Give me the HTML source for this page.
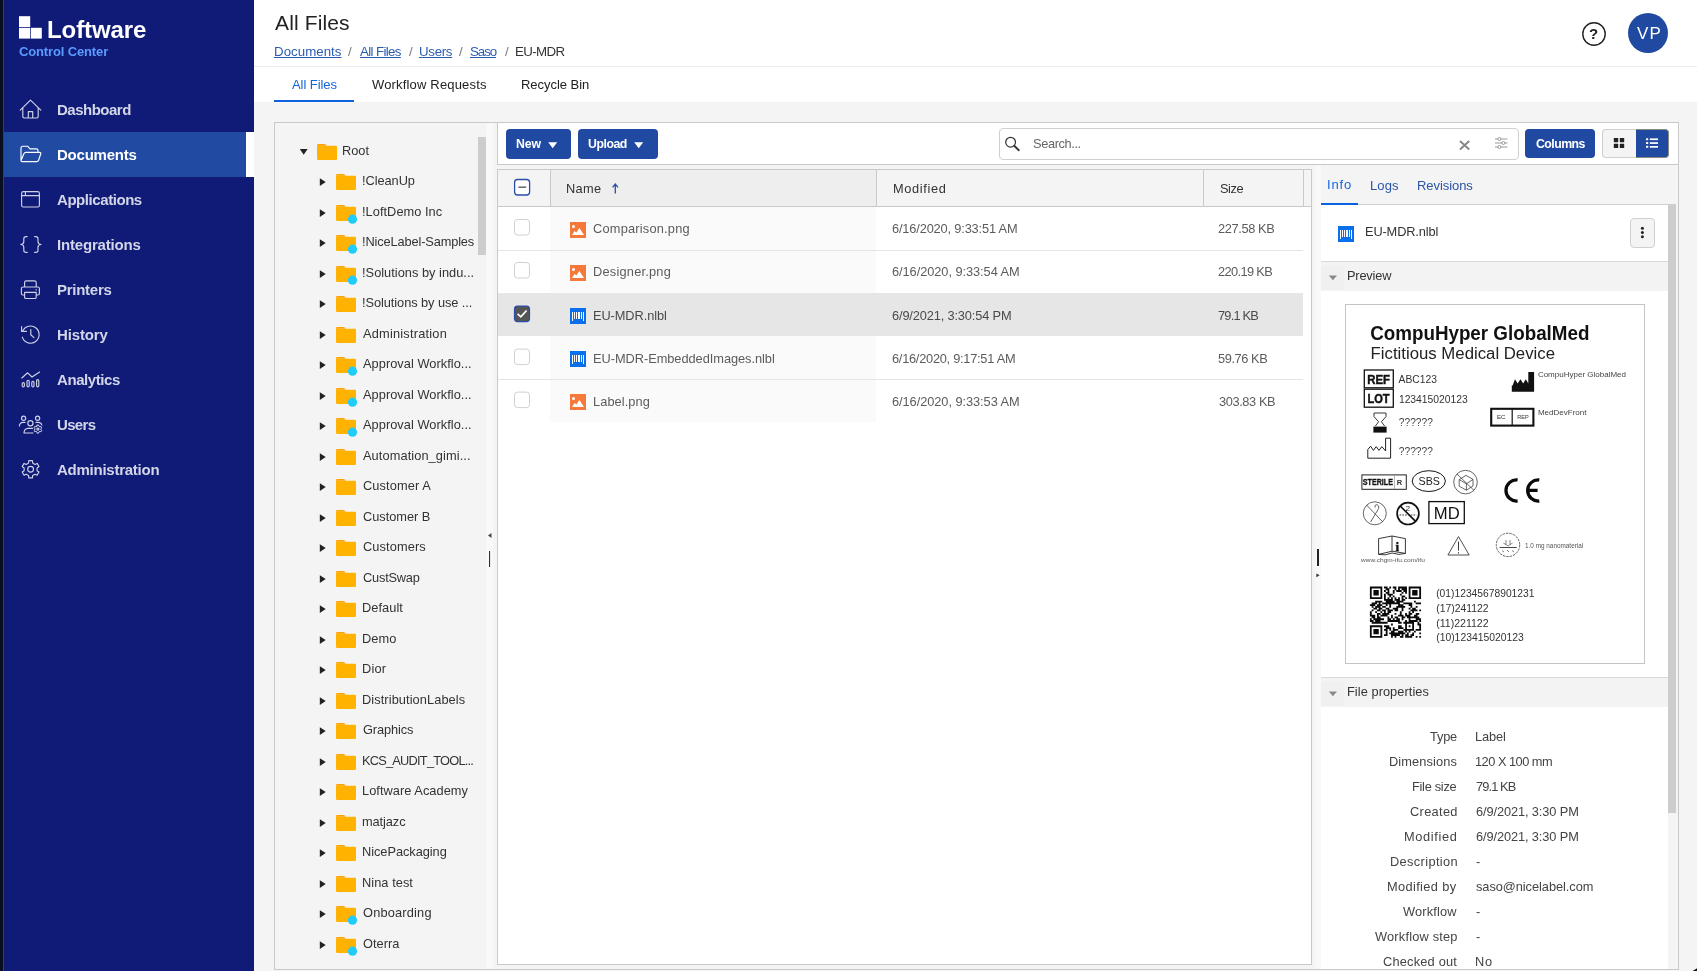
<!DOCTYPE html><html><head><meta charset="utf-8"><title>All Files</title><style>
*{box-sizing:border-box;margin:0;padding:0}
html,body{width:1697px;height:971px;overflow:hidden}
body{background:#f4f4f4;font-family:"Liberation Sans",sans-serif;color:#333;position:relative;font-size:13px}
.a{position:absolute}
.t{position:absolute;white-space:nowrap;line-height:1;will-change:transform}
.u{text-decoration:underline}
svg{position:absolute;overflow:visible;will-change:transform}
</style></head><body>
<div class="a" style="left:0px;top:0px;width:3px;height:971px;background:#0a0f1f;"></div>
<div class="a" style="left:3px;top:0px;width:1px;height:971px;background:#3c3f4a;"></div>
<div class="a" style="left:4px;top:0px;width:250px;height:971px;background:#0f1b77;"></div>
<div class="a" style="left:4px;top:132px;width:242px;height:45px;background:#214ba3;"></div>
<div class="a" style="left:246px;top:132px;width:8px;height:45px;background:#fff;"></div>
<svg style="left:19px;top:16px" width="24" height="23" viewBox="0 0 24 23"><rect x="0" y="0.2" width="11.2" height="10.8" fill="#fff"/><rect x="0" y="11.8" width="11.2" height="10.8" fill="#fff"/><rect x="11.9" y="11.8" width="10.9" height="10.8" fill="#fff"/></svg>
<div class="t" style="left:46.94px;top:18.00px;font-size:24px;color:#fff;font-weight:bold;letter-spacing:-0.097px;">Loftware</div>
<div class="t" style="left:18.98px;top:45.00px;font-size:13px;color:#5b9bff;font-weight:bold;letter-spacing:-0.137px;">Control Center</div>
<div class="t" style="left:56.73px;top:102.00px;font-size:15px;color:#d3d6e8;font-weight:bold;letter-spacing:-0.506px;">Dashboard</div>
<div class="t" style="left:56.73px;top:147.00px;font-size:15px;color:#fff;font-weight:bold;letter-spacing:-0.234px;">Documents</div>
<div class="t" style="left:57.33px;top:192.00px;font-size:15px;color:#d3d6e8;font-weight:bold;letter-spacing:-0.436px;">Applications</div>
<div class="t" style="left:56.73px;top:237.00px;font-size:15px;color:#d3d6e8;font-weight:bold;letter-spacing:-0.182px;">Integrations</div>
<div class="t" style="left:56.73px;top:282.00px;font-size:15px;color:#d3d6e8;font-weight:bold;letter-spacing:-0.271px;">Printers</div>
<div class="t" style="left:56.73px;top:327.00px;font-size:15px;color:#d3d6e8;font-weight:bold;letter-spacing:-0.150px;">History</div>
<div class="t" style="left:57.33px;top:372.00px;font-size:15px;color:#d3d6e8;font-weight:bold;letter-spacing:-0.434px;">Analytics</div>
<div class="t" style="left:56.80px;top:417.00px;font-size:15px;color:#d3d6e8;font-weight:bold;letter-spacing:-0.669px;">Users</div>
<div class="t" style="left:57.33px;top:462.00px;font-size:15px;color:#d3d6e8;font-weight:bold;letter-spacing:-0.250px;">Administration</div>
<div class="a" style="left:254px;top:0px;width:1443px;height:102px;background:#fff;"></div>
<div class="a" style="left:254px;top:66px;width:1443px;height:1px;background:#ececec;"></div>
<div class="t" style="left:274.50px;top:12.00px;font-size:21px;color:#222;letter-spacing:0.129px;">All Files</div>
<div class="t u" style="left:273.94px;top:45.00px;font-size:13.3px;color:#2a5db0;letter-spacing:0.029px;">Documents</div>
<div class="t u" style="left:360.00px;top:45.00px;font-size:13.3px;color:#2a5db0;letter-spacing:-0.636px;">All Files</div>
<div class="t u" style="left:419.00px;top:45.00px;font-size:13.3px;color:#2a5db0;letter-spacing:-0.312px;">Users</div>
<div class="t u" style="left:470.40px;top:45.00px;font-size:13.3px;color:#2a5db0;letter-spacing:-1.065px;">Saso</div>
<div class="t" style="left:347.50px;top:45.00px;font-size:13.3px;color:#777;">/</div>
<div class="t" style="left:408.50px;top:45.00px;font-size:13.3px;color:#777;">/</div>
<div class="t" style="left:459.00px;top:45.00px;font-size:13.3px;color:#777;">/</div>
<div class="t" style="left:504.50px;top:45.00px;font-size:13.3px;color:#777;">/</div>
<div class="t" style="left:514.94px;top:45.00px;font-size:13.3px;color:#333;letter-spacing:-0.621px;">EU-MDR</div>
<div class="t" style="left:292.00px;top:78.00px;font-size:13px;color:#1464dc;letter-spacing:-0.068px;">All Files</div>
<div class="t" style="left:372.00px;top:78.00px;font-size:13px;color:#222;letter-spacing:0.170px;">Workflow Requests</div>
<div class="t" style="left:520.96px;top:78.00px;font-size:13px;color:#222;letter-spacing:-0.032px;">Recycle Bin</div>
<div class="a" style="left:274px;top:100px;width:80px;height:2px;background:#0a62e0;"></div>
<div class="a" style="left:274px;top:102px;width:80px;height:1px;background:#fdf9f2;"></div>
<svg style="left:1580px;top:20px" width="28" height="28" viewBox="0 0 28 28"><circle cx="14" cy="14" r="11.2" fill="none" stroke="#222" stroke-width="1.4"/></svg>
<div class="t" style="left:1588.73px;top:26.00px;font-size:15px;color:#222;font-weight:bold;">?</div>
<div class="a" style="left:1628px;top:13px;width:40px;height:40px;background:#204aa2;border-radius:50%"></div>
<div class="t" style="left:1636.50px;top:25.00px;font-size:17px;color:#fff;letter-spacing:1.240px;">VP</div>
<svg style="left:0;top:0" width="1697" height="971" viewBox="0 0 1697 971" ><g fill="none" stroke="#cfd2e6" stroke-width="1.15" stroke-linecap="round" stroke-linejoin="round"><path d="M20.2 110.2 L30.5 100.2 L40.8 110.2 M22.8 108 V116.6 Q22.8 118 24.2 118 H36.8 Q38.2 118 38.2 116.6 V108 M28.3 118 V111.6 H32.7 V118"/><rect x="21.6" y="191.6" width="17.8" height="15.4" rx="1.8"/><path d="M21.6 195.6 H39.4 M25.4 191.6 V195.6"/><path d="M27.2 236.6 H26 Q23.8 236.6 23.8 238.8 V241.6 Q23.8 244.4 20.8 244.5 Q23.8 244.6 23.8 247.4 V250.2 Q23.8 252.4 26 252.4 H27.2 M34.6 236.6 H35.8 Q38 236.6 38 238.8 V241.6 Q38 244.4 41 244.5 Q38 244.6 38 247.4 V250.2 Q38 252.4 35.8 252.4 H34.6"/><path d="M24.6 287 V282.6 Q24.6 280.9 26.3 280.9 H34.5 Q36.2 280.9 36.2 282.6 V287 M24.6 295 H22.9 Q21.4 295 21.4 293.5 V288.6 Q21.4 287 23 287 H37.8 Q39.4 287 39.4 288.6 V293.5 Q39.4 295 37.9 295 H36.2 M24.6 292.4 H36.2 V297.2 Q36.2 298.5 34.9 298.5 H25.9 Q24.6 298.5 24.6 297.2 Z M36 289.8 H36.4"/><path d="M22.6 331.2 A8.6 8.6 0 1 1 22.3 337.2 M21.6 326.6 V331.4 H26.4 M30.8 329.6 V334.8 L34 337.6"/><path d="M21.8 378 L27.6 372.8 L32 377 L39.6 372"/><rect x="22.2" y="382.6" width="2.2" height="4.2" rx="1.1"/><rect x="27" y="380.2" width="2.2" height="6.6" rx="1.1"/><rect x="31.8" y="381.4" width="2.2" height="5.4" rx="1.1"/><rect x="36.6" y="379.6" width="2.2" height="7.2" rx="1.1"/><circle cx="23.6" cy="418.2" r="2.1"/><circle cx="37.6" cy="418.2" r="2.1"/><circle cx="30.4" cy="423.2" r="2.6"/><path d="M19.4 426 Q19.6 422.6 23 422.4 H25 M36 422.4 H38.2 Q41.4 422.6 41.8 425 M24 433 Q24.2 428.6 28 428.4 H32.6 M24 433 H33"/><circle cx="37.9" cy="429.1" r="1.05"/><path d="M37.05 425.09 L38.75 425.09 L38.83 426.25 L39.91 426.87 L40.95 426.36 L41.80 427.83 L40.83 428.48 L40.83 429.72 L41.80 430.37 L40.95 431.84 L39.91 431.33 L38.83 431.95 L38.75 433.11 L37.05 433.11 L36.97 431.95 L35.89 431.33 L34.85 431.84 L34.00 430.37 L34.97 429.72 L34.97 428.48 L34.00 427.83 L34.85 426.36 L35.89 426.87 L36.97 426.25 Z" stroke-width="1"/><path d="M28.77 460.69 L32.43 460.69 L32.64 463.02 L35.02 464.40 L37.14 463.41 L38.97 466.58 L37.06 467.93 L37.06 470.67 L38.97 472.02 L37.14 475.19 L35.02 474.20 L32.64 475.58 L32.43 477.91 L28.77 477.91 L28.56 475.58 L26.18 474.20 L24.06 475.19 L22.23 472.02 L24.14 470.67 L24.14 467.93 L22.23 466.58 L24.06 463.41 L26.18 464.40 L28.56 463.02 Z"/><circle cx="30.6" cy="469.3" r="2.9"/></g><g fill="none" stroke="#ffffff" stroke-width="1.15" stroke-linecap="round" stroke-linejoin="round"><path d="M21 160.5 V148 Q21 146.2 22.8 146.2 H27.5 L30 148.8 H36.2 Q38 148.8 38 150.6 V152.3 M21 160.5 L24 153.6 Q24.5 152.3 26 152.3 H39.5 Q41.3 152.3 40.7 154 L38.6 160.2 Q38.1 161.6 36.6 161.6 H22.2 Q21 161.6 21 160.5"/></g></svg>
<div class="a" style="left:274px;top:122px;width:1405px;height:848px;background:transparent;border:1px solid #c9c9c9"></div>
<div class="a" style="left:486px;top:123px;width:7px;height:846px;background:#faf9f8;"></div>
<div class="a" style="left:478px;top:137px;width:8px;height:118px;background:#cdcdcd;"></div>
<svg style="left:0;top:0" width="1697" height="971" viewBox="0 0 1697 971" ><path d="M491.5 533 L488 535.5 L491.5 538 Z" fill="#444"/><rect x="489" y="551" width="1.1" height="16" fill="#333"/></svg>
<div class="t" style="left:342.18px;top:145.00px;font-size:12.8px;color:#333;letter-spacing:0.005px;">Root</div>
<div class="t" style="left:362.15px;top:175.00px;font-size:12.8px;color:#333;letter-spacing:-0.059px;">!CleanUp</div>
<div class="t" style="left:362.15px;top:206.00px;font-size:12.8px;color:#333;letter-spacing:0.041px;">!LoftDemo Inc</div>
<div class="t" style="left:362.15px;top:236.00px;font-size:12.8px;color:#333;letter-spacing:-0.133px;">!NiceLabel-Samples</div>
<div class="t" style="left:362.15px;top:267.00px;font-size:12.8px;color:#333;letter-spacing:0.018px;">!Solutions by indu...</div>
<div class="t" style="left:362.15px;top:297.00px;font-size:12.8px;color:#333;letter-spacing:-0.067px;">!Solutions by use ...</div>
<div class="t" style="left:363.30px;top:328.00px;font-size:12.8px;color:#333;letter-spacing:0.206px;">Administration</div>
<div class="t" style="left:363.30px;top:358.00px;font-size:12.8px;color:#333;letter-spacing:0.042px;">Approval Workflo...</div>
<div class="t" style="left:363.30px;top:389.00px;font-size:12.8px;color:#333;letter-spacing:0.042px;">Approval Workflo...</div>
<div class="t" style="left:363.30px;top:419.00px;font-size:12.8px;color:#333;letter-spacing:0.042px;">Approval Workflo...</div>
<div class="t" style="left:363.30px;top:450.00px;font-size:12.8px;color:#333;letter-spacing:0.088px;">Automation_gimi...</div>
<div class="t" style="left:362.66px;top:480.00px;font-size:12.8px;color:#333;letter-spacing:0.114px;">Customer A</div>
<div class="t" style="left:362.66px;top:511.00px;font-size:12.8px;color:#333;letter-spacing:-0.027px;">Customer B</div>
<div class="t" style="left:362.66px;top:541.00px;font-size:12.8px;color:#333;letter-spacing:0.112px;">Customers</div>
<div class="t" style="left:362.66px;top:572.00px;font-size:12.8px;color:#333;letter-spacing:-0.207px;">CustSwap</div>
<div class="t" style="left:362.28px;top:602.00px;font-size:12.8px;color:#333;letter-spacing:0.052px;">Default</div>
<div class="t" style="left:362.28px;top:633.00px;font-size:12.8px;color:#333;letter-spacing:0.108px;">Demo</div>
<div class="t" style="left:362.28px;top:663.00px;font-size:12.8px;color:#333;letter-spacing:0.176px;">Dior</div>
<div class="t" style="left:362.28px;top:694.00px;font-size:12.8px;color:#333;letter-spacing:0.083px;">DistributionLabels</div>
<div class="t" style="left:362.66px;top:724.00px;font-size:12.8px;color:#333;letter-spacing:-0.116px;">Graphics</div>
<div class="t" style="left:362.28px;top:755.00px;font-size:12.8px;color:#333;letter-spacing:-0.769px;">KCS_AUDIT_TOOL...</div>
<div class="t" style="left:362.28px;top:785.00px;font-size:12.8px;color:#333;letter-spacing:0.043px;">Loftware Academy</div>
<div class="t" style="left:362.47px;top:816.00px;font-size:12.8px;color:#333;letter-spacing:-0.091px;">matjazc</div>
<div class="t" style="left:362.28px;top:846.00px;font-size:12.8px;color:#333;letter-spacing:-0.049px;">NicePackaging</div>
<div class="t" style="left:362.28px;top:877.00px;font-size:12.8px;color:#333;letter-spacing:0.053px;">Nina test</div>
<div class="t" style="left:362.72px;top:907.00px;font-size:12.8px;color:#333;letter-spacing:0.185px;">Onboarding</div>
<div class="t" style="left:362.72px;top:938.00px;font-size:12.8px;color:#333;letter-spacing:0.005px;">Oterra</div>
<svg style="left:0;top:0" width="1697" height="971" viewBox="0 0 1697 971" ><path d="M317 145.2 Q317 144 318.2 144 H325 L326.8 145.8 H317 Z" fill="#ffa000"/><path d="M317 145.7 H335.8 Q337 145.7 337 146.9 V158.8 Q337 160 335.8 160 H318.2 Q317 160 317 158.8 Z" fill="#ffb300"/><path d="M299.8 149 H307.6 L303.7 154.8 Z" fill="#222"/><path d="M336 175.2 Q336 174 337.2 174 H344 L345.8 175.8 H336 Z" fill="#ffa000"/><path d="M336 175.7 H354.8 Q356 175.7 356 176.9 V188.8 Q356 190 354.8 190 H337.2 Q336 190 336 188.8 Z" fill="#ffb300"/><path d="M319.8 178.29999999999998 V185.9 L325.7 182.1 Z" fill="#222"/><path d="M336 206.2 Q336 205 337.2 205 H344 L345.8 206.8 H336 Z" fill="#ffa000"/><path d="M336 206.7 H354.8 Q356 206.7 356 207.9 V219.8 Q356 221 354.8 221 H337.2 Q336 221 336 219.8 Z" fill="#ffb300"/><circle cx="352.5" cy="219.2" r="4.6" fill="#22ccfa"/><path d="M319.8 209.29999999999998 V216.9 L325.7 213.1 Z" fill="#222"/><path d="M336 236.2 Q336 235 337.2 235 H344 L345.8 236.8 H336 Z" fill="#ffa000"/><path d="M336 236.7 H354.8 Q356 236.7 356 237.9 V249.8 Q356 251 354.8 251 H337.2 Q336 251 336 249.8 Z" fill="#ffb300"/><circle cx="352.5" cy="249.2" r="4.6" fill="#22ccfa"/><path d="M319.8 239.29999999999998 V246.9 L325.7 243.1 Z" fill="#222"/><path d="M336 267.2 Q336 266 337.2 266 H344 L345.8 267.8 H336 Z" fill="#ffa000"/><path d="M336 267.7 H354.8 Q356 267.7 356 268.9 V280.8 Q356 282 354.8 282 H337.2 Q336 282 336 280.8 Z" fill="#ffb300"/><circle cx="352.5" cy="280.2" r="4.6" fill="#22ccfa"/><path d="M319.8 270.3 V277.90000000000003 L325.7 274.1 Z" fill="#222"/><path d="M336 297.2 Q336 296 337.2 296 H344 L345.8 297.8 H336 Z" fill="#ffa000"/><path d="M336 297.7 H354.8 Q356 297.7 356 298.9 V310.8 Q356 312 354.8 312 H337.2 Q336 312 336 310.8 Z" fill="#ffb300"/><path d="M319.8 300.3 V307.90000000000003 L325.7 304.1 Z" fill="#222"/><path d="M336 328.2 Q336 327 337.2 327 H344 L345.8 328.8 H336 Z" fill="#ffa000"/><path d="M336 328.7 H354.8 Q356 328.7 356 329.9 V341.8 Q356 343 354.8 343 H337.2 Q336 343 336 341.8 Z" fill="#ffb300"/><path d="M319.8 331.3 V338.90000000000003 L325.7 335.1 Z" fill="#222"/><path d="M336 358.2 Q336 357 337.2 357 H344 L345.8 358.8 H336 Z" fill="#ffa000"/><path d="M336 358.7 H354.8 Q356 358.7 356 359.9 V371.8 Q356 373 354.8 373 H337.2 Q336 373 336 371.8 Z" fill="#ffb300"/><circle cx="352.5" cy="371.2" r="4.6" fill="#22ccfa"/><path d="M319.8 361.3 V368.90000000000003 L325.7 365.1 Z" fill="#222"/><path d="M336 389.2 Q336 388 337.2 388 H344 L345.8 389.8 H336 Z" fill="#ffa000"/><path d="M336 389.7 H354.8 Q356 389.7 356 390.9 V402.8 Q356 404 354.8 404 H337.2 Q336 404 336 402.8 Z" fill="#ffb300"/><circle cx="352.5" cy="402.2" r="4.6" fill="#22ccfa"/><path d="M319.8 392.3 V399.90000000000003 L325.7 396.1 Z" fill="#222"/><path d="M336 419.2 Q336 418 337.2 418 H344 L345.8 419.8 H336 Z" fill="#ffa000"/><path d="M336 419.7 H354.8 Q356 419.7 356 420.9 V432.8 Q356 434 354.8 434 H337.2 Q336 434 336 432.8 Z" fill="#ffb300"/><circle cx="352.5" cy="432.2" r="4.6" fill="#22ccfa"/><path d="M319.8 422.3 V429.90000000000003 L325.7 426.1 Z" fill="#222"/><path d="M336 450.2 Q336 449 337.2 449 H344 L345.8 450.8 H336 Z" fill="#ffa000"/><path d="M336 450.7 H354.8 Q356 450.7 356 451.9 V463.8 Q356 465 354.8 465 H337.2 Q336 465 336 463.8 Z" fill="#ffb300"/><path d="M319.8 453.3 V460.90000000000003 L325.7 457.1 Z" fill="#222"/><path d="M336 480.2 Q336 479 337.2 479 H344 L345.8 480.8 H336 Z" fill="#ffa000"/><path d="M336 480.7 H354.8 Q356 480.7 356 481.9 V493.8 Q356 495 354.8 495 H337.2 Q336 495 336 493.8 Z" fill="#ffb300"/><path d="M319.8 483.3 V490.90000000000003 L325.7 487.1 Z" fill="#222"/><path d="M336 511.2 Q336 510 337.2 510 H344 L345.8 511.8 H336 Z" fill="#ffa000"/><path d="M336 511.7 H354.8 Q356 511.7 356 512.9 V524.8 Q356 526 354.8 526 H337.2 Q336 526 336 524.8 Z" fill="#ffb300"/><path d="M319.8 514.3000000000001 V521.9 L325.7 518.1 Z" fill="#222"/><path d="M336 541.2 Q336 540 337.2 540 H344 L345.8 541.8 H336 Z" fill="#ffa000"/><path d="M336 541.7 H354.8 Q356 541.7 356 542.9 V554.8 Q356 556 354.8 556 H337.2 Q336 556 336 554.8 Z" fill="#ffb300"/><path d="M319.8 544.3000000000001 V551.9 L325.7 548.1 Z" fill="#222"/><path d="M336 572.2 Q336 571 337.2 571 H344 L345.8 572.8 H336 Z" fill="#ffa000"/><path d="M336 572.7 H354.8 Q356 572.7 356 573.9 V585.8 Q356 587 354.8 587 H337.2 Q336 587 336 585.8 Z" fill="#ffb300"/><path d="M319.8 575.3000000000001 V582.9 L325.7 579.1 Z" fill="#222"/><path d="M336 602.2 Q336 601 337.2 601 H344 L345.8 602.8 H336 Z" fill="#ffa000"/><path d="M336 602.7 H354.8 Q356 602.7 356 603.9 V615.8 Q356 617 354.8 617 H337.2 Q336 617 336 615.8 Z" fill="#ffb300"/><path d="M319.8 605.3000000000001 V612.9 L325.7 609.1 Z" fill="#222"/><path d="M336 633.2 Q336 632 337.2 632 H344 L345.8 633.8 H336 Z" fill="#ffa000"/><path d="M336 633.7 H354.8 Q356 633.7 356 634.9 V646.8 Q356 648 354.8 648 H337.2 Q336 648 336 646.8 Z" fill="#ffb300"/><path d="M319.8 636.3000000000001 V643.9 L325.7 640.1 Z" fill="#222"/><path d="M336 663.2 Q336 662 337.2 662 H344 L345.8 663.8 H336 Z" fill="#ffa000"/><path d="M336 663.7 H354.8 Q356 663.7 356 664.9 V676.8 Q356 678 354.8 678 H337.2 Q336 678 336 676.8 Z" fill="#ffb300"/><path d="M319.8 666.3000000000001 V673.9 L325.7 670.1 Z" fill="#222"/><path d="M336 694.2 Q336 693 337.2 693 H344 L345.8 694.8 H336 Z" fill="#ffa000"/><path d="M336 694.7 H354.8 Q356 694.7 356 695.9 V707.8 Q356 709 354.8 709 H337.2 Q336 709 336 707.8 Z" fill="#ffb300"/><path d="M319.8 697.3000000000001 V704.9 L325.7 701.1 Z" fill="#222"/><path d="M336 724.2 Q336 723 337.2 723 H344 L345.8 724.8 H336 Z" fill="#ffa000"/><path d="M336 724.7 H354.8 Q356 724.7 356 725.9 V737.8 Q356 739 354.8 739 H337.2 Q336 739 336 737.8 Z" fill="#ffb300"/><path d="M319.8 727.3000000000001 V734.9 L325.7 731.1 Z" fill="#222"/><path d="M336 755.2 Q336 754 337.2 754 H344 L345.8 755.8 H336 Z" fill="#ffa000"/><path d="M336 755.7 H354.8 Q356 755.7 356 756.9 V768.8 Q356 770 354.8 770 H337.2 Q336 770 336 768.8 Z" fill="#ffb300"/><path d="M319.8 758.3000000000001 V765.9 L325.7 762.1 Z" fill="#222"/><path d="M336 785.2 Q336 784 337.2 784 H344 L345.8 785.8 H336 Z" fill="#ffa000"/><path d="M336 785.7 H354.8 Q356 785.7 356 786.9 V798.8 Q356 800 354.8 800 H337.2 Q336 800 336 798.8 Z" fill="#ffb300"/><path d="M319.8 788.3000000000001 V795.9 L325.7 792.1 Z" fill="#222"/><path d="M336 816.2 Q336 815 337.2 815 H344 L345.8 816.8 H336 Z" fill="#ffa000"/><path d="M336 816.7 H354.8 Q356 816.7 356 817.9 V829.8 Q356 831 354.8 831 H337.2 Q336 831 336 829.8 Z" fill="#ffb300"/><path d="M319.8 819.3000000000001 V826.9 L325.7 823.1 Z" fill="#222"/><path d="M336 846.2 Q336 845 337.2 845 H344 L345.8 846.8 H336 Z" fill="#ffa000"/><path d="M336 846.7 H354.8 Q356 846.7 356 847.9 V859.8 Q356 861 354.8 861 H337.2 Q336 861 336 859.8 Z" fill="#ffb300"/><path d="M319.8 849.3000000000001 V856.9 L325.7 853.1 Z" fill="#222"/><path d="M336 877.2 Q336 876 337.2 876 H344 L345.8 877.8 H336 Z" fill="#ffa000"/><path d="M336 877.7 H354.8 Q356 877.7 356 878.9 V890.8 Q356 892 354.8 892 H337.2 Q336 892 336 890.8 Z" fill="#ffb300"/><path d="M319.8 880.3000000000001 V887.9 L325.7 884.1 Z" fill="#222"/><path d="M336 907.2 Q336 906 337.2 906 H344 L345.8 907.8 H336 Z" fill="#ffa000"/><path d="M336 907.7 H354.8 Q356 907.7 356 908.9 V920.8 Q356 922 354.8 922 H337.2 Q336 922 336 920.8 Z" fill="#ffb300"/><circle cx="352.5" cy="920.2" r="4.6" fill="#22ccfa"/><path d="M319.8 910.3000000000001 V917.9 L325.7 914.1 Z" fill="#222"/><path d="M336 938.2 Q336 937 337.2 937 H344 L345.8 938.8 H336 Z" fill="#ffa000"/><path d="M336 938.7 H354.8 Q356 938.7 356 939.9 V951.8 Q356 953 354.8 953 H337.2 Q336 953 336 951.8 Z" fill="#ffb300"/><circle cx="352.5" cy="951.2" r="4.6" fill="#22ccfa"/><path d="M319.8 941.3000000000001 V948.9 L325.7 945.1 Z" fill="#222"/></svg>
<div class="a" style="left:497px;top:123px;width:1181px;height:41px;background:#fff;border-left:1px solid #c9c9c9"></div>
<div class="a" style="left:497px;top:164px;width:1181px;height:1px;background:#c9c9c9;"></div>
<div class="a" style="left:506px;top:129px;width:65px;height:30px;background:#204aa2;border-radius:4px"></div>
<div class="t" style="left:516.00px;top:138.00px;font-size:12.3px;color:#fff;font-weight:bold;letter-spacing:-0.169px;">New</div>
<div class="a" style="left:578px;top:129px;width:80px;height:30px;background:#204aa2;border-radius:4px"></div>
<div class="t" style="left:588.26px;top:138.00px;font-size:12.3px;color:#fff;font-weight:bold;letter-spacing:-0.472px;">Upload</div>
<svg style="left:0;top:0" width="1697" height="971" viewBox="0 0 1697 971" ><path d="M548.2 142.2 H557.2 L552.7 148.3 Z M634.2 142.2 H643.2 L638.7 148.3 Z" fill="#fff"/></svg>
<div class="a" style="left:999px;top:128px;width:520px;height:32px;background:#fff;border:1px solid #cfcfcf;border-radius:4px"></div>
<svg style="left:0;top:0" width="1697" height="971" viewBox="0 0 1697 971" ><circle cx="1010.6" cy="142.2" r="4.9" fill="none" stroke="#333" stroke-width="1.2"/><path d="M1014.2 145.8 L1018.8 150.2" stroke="#333" stroke-width="1.9" stroke-linecap="round"/><path d="M1460 141 L1469.2 149.6 M1469.2 141 L1460 149.6" stroke="#888" stroke-width="2"/><g stroke="#999" stroke-width="1" fill="#fff"><path d="M1495 139 H1507.4 M1495 143 H1507.4 M1495 147 H1507.4"/><circle cx="1499.4" cy="139" r="1.5"/><circle cx="1503.4" cy="143" r="1.5"/><circle cx="1499.4" cy="147" r="1.5"/></g></svg>
<div class="t" style="left:1033.42px;top:138.00px;font-size:12.8px;color:#666;letter-spacing:-0.380px;">Search...</div>
<div class="a" style="left:1525px;top:129px;width:70px;height:29px;background:#204aa2;border-radius:4px"></div>
<div class="t" style="left:1535.51px;top:138.00px;font-size:12.3px;color:#fff;font-weight:bold;letter-spacing:-0.527px;">Columns</div>
<div class="a" style="left:1602px;top:129px;width:34px;height:29px;background:#f4f4f4;border:1px solid #cfcfcf;border-right:none;border-radius:4px 0 0 4px"></div>
<div class="a" style="left:1635.5px;top:129px;width:33.5px;height:29px;background:#204aa2;border-radius:0 4px 4px 0;border:1px solid #8a8a80;border-left:none"></div>
<svg style="left:0;top:0" width="1697" height="971" viewBox="0 0 1697 971" ><g fill="#222"><rect x="1613.8" y="138" width="4.4" height="4.2" rx="0.6"/><rect x="1619.8" y="138" width="4.4" height="4.2" rx="0.6"/><rect x="1613.8" y="143.8" width="4.4" height="4.2" rx="0.6"/><rect x="1619.8" y="143.8" width="4.4" height="4.2" rx="0.6"/></g><g fill="#fff"><rect x="1646" y="138.2" width="2.2" height="2" rx="0.5"/><rect x="1646" y="142" width="2.2" height="2" rx="0.5"/><rect x="1646" y="145.8" width="2.2" height="2" rx="0.5"/><rect x="1649.8" y="138.4" width="8.2" height="1.7"/><rect x="1649.8" y="142.2" width="8.2" height="1.7"/><rect x="1649.8" y="146" width="8.2" height="1.7"/></g></svg>
<div class="a" style="left:497px;top:169px;width:815px;height:796px;background:#fff;border:1px solid #c9c9c9"></div>
<div class="a" style="left:498px;top:170px;width:813px;height:36px;background:#f4f4f4;"></div>
<div class="a" style="left:550px;top:170px;width:326px;height:36px;background:#eeeeee;"></div>
<div class="a" style="left:498px;top:206px;width:813px;height:1px;background:#c9c9c9;"></div>
<div class="a" style="left:550px;top:170px;width:1px;height:36px;background:#c9c9c9;"></div>
<div class="a" style="left:876px;top:170px;width:1px;height:36px;background:#c9c9c9;"></div>
<div class="a" style="left:1203px;top:170px;width:1px;height:36px;background:#c9c9c9;"></div>
<div class="a" style="left:1303px;top:170px;width:1px;height:36px;background:#c9c9c9;"></div>
<div class="t" style="left:566.38px;top:183.00px;font-size:12.8px;color:#333;letter-spacing:0.341px;">Name</div>
<div class="t" style="left:892.98px;top:183.00px;font-size:12.8px;color:#333;letter-spacing:0.630px;">Modified</div>
<div class="t" style="left:1219.92px;top:183.00px;font-size:12.8px;color:#333;letter-spacing:-0.436px;">Size</div>
<svg style="left:0;top:0" width="1697" height="971" viewBox="0 0 1697 971" ><path d="M615.3 193.6 V184.6 M612.6 187.4 L615.3 184 L618 187.4" fill="none" stroke="#2a4ea8" stroke-width="1.3"/></svg>
<div class="a" style="left:550px;top:207px;width:326px;height:43px;background:#fafafa;"></div>
<div class="t" style="left:593.36px;top:223.00px;font-size:12.8px;color:#5c5c5c;letter-spacing:0.209px;">Comparison.png</div>
<div class="t" style="left:892.36px;top:223.00px;font-size:12.8px;color:#5c5c5c;letter-spacing:-0.158px;">6/16/2020, 9:33:51 AM</div>
<div class="t" style="left:1218.36px;top:223.00px;font-size:12.8px;color:#5c5c5c;letter-spacing:-0.375px;">227.58 KB</div>
<div class="a" style="left:550px;top:250px;width:326px;height:43px;background:#fafafa;"></div>
<div class="a" style="left:498px;top:250px;width:805px;height:1px;background:#e5e5e5;"></div>
<div class="t" style="left:592.98px;top:266.00px;font-size:12.8px;color:#5c5c5c;letter-spacing:0.218px;">Designer.png</div>
<div class="t" style="left:892.36px;top:266.00px;font-size:12.8px;color:#5c5c5c;letter-spacing:-0.058px;">6/16/2020, 9:33:54 AM</div>
<div class="t" style="left:1218.36px;top:266.00px;font-size:12.8px;color:#5c5c5c;letter-spacing:-0.625px;">220.19 KB</div>
<div class="a" style="left:498px;top:293px;width:805px;height:43.4px;background:#e6e6e6;"></div>
<div class="t" style="left:592.98px;top:310.00px;font-size:12.8px;color:#4a4a4a;letter-spacing:-0.083px;">EU-MDR.nlbl</div>
<div class="t" style="left:892.36px;top:310.00px;font-size:12.8px;color:#4a4a4a;letter-spacing:-0.146px;">6/9/2021, 3:30:54 PM</div>
<div class="t" style="left:1218.36px;top:310.00px;font-size:12.8px;color:#4a4a4a;letter-spacing:-0.787px;">79.1 KB</div>
<div class="a" style="left:550px;top:336px;width:326px;height:43px;background:#fafafa;"></div>
<div class="t" style="left:592.98px;top:353.00px;font-size:12.8px;color:#5c5c5c;letter-spacing:-0.040px;">EU-MDR-EmbeddedImages.nlbl</div>
<div class="t" style="left:892.36px;top:353.00px;font-size:12.8px;color:#5c5c5c;letter-spacing:-0.258px;">6/16/2020, 9:17:51 AM</div>
<div class="t" style="left:1218.49px;top:353.00px;font-size:12.8px;color:#5c5c5c;letter-spacing:-0.422px;">59.76 KB</div>
<div class="a" style="left:550px;top:379px;width:326px;height:42.6px;background:#fafafa;"></div>
<div class="a" style="left:498px;top:379px;width:805px;height:1px;background:#e5e5e5;"></div>
<div class="t" style="left:592.98px;top:396.00px;font-size:12.8px;color:#5c5c5c;letter-spacing:0.075px;">Label.png</div>
<div class="t" style="left:892.36px;top:396.00px;font-size:12.8px;color:#5c5c5c;letter-spacing:-0.058px;">6/16/2020, 9:33:53 AM</div>
<div class="t" style="left:1218.55px;top:396.00px;font-size:12.8px;color:#5c5c5c;letter-spacing:-0.399px;">303.83 KB</div>
<svg style="left:0;top:0" width="1697" height="971" viewBox="0 0 1697 971" ><rect x="570" y="222" width="16" height="16" fill="#f5793b"/><circle cx="573.5" cy="226.6" r="1.5" fill="#fff"/><path d="M572 235 L574.6 231 L576.3 232.4 L579.4 228 L584 235 Z" fill="#fff"/><rect x="514.5" y="219.5" width="15" height="15.5" rx="3" fill="#fff" stroke="#d0d0d0" stroke-width="1"/><rect x="570" y="265" width="16" height="16" fill="#f5793b"/><circle cx="573.5" cy="269.6" r="1.5" fill="#fff"/><path d="M572 278 L574.6 274 L576.3 275.4 L579.4 271 L584 278 Z" fill="#fff"/><rect x="514.5" y="262.5" width="15" height="15.5" rx="3" fill="#fff" stroke="#d0d0d0" stroke-width="1"/><rect x="570" y="308" width="16" height="16" fill="#0a70ea"/><rect x="572" y="312" width="1" height="9" fill="#fff"/><rect x="574" y="312" width="1" height="7" fill="#fff"/><rect x="576" y="312" width="1" height="7" fill="#fff"/><rect x="578" y="312" width="2" height="7" fill="#fff"/><rect x="581" y="312" width="1" height="7" fill="#fff"/><rect x="583" y="312" width="1" height="9" fill="#fff"/><rect x="514.5" y="306.1" width="15" height="15.5" rx="3" fill="#555" stroke="#2a4ea8" stroke-width="1.2"/><path d="M517.6 313.90000000000003 L520.8 316.90000000000003 L526.6 310.5" fill="none" stroke="#fff" stroke-width="1.7"/><rect x="570" y="351" width="16" height="16" fill="#0a70ea"/><rect x="572" y="355" width="1" height="9" fill="#fff"/><rect x="574" y="355" width="1" height="7" fill="#fff"/><rect x="576" y="355" width="1" height="7" fill="#fff"/><rect x="578" y="355" width="2" height="7" fill="#fff"/><rect x="581" y="355" width="1" height="7" fill="#fff"/><rect x="583" y="355" width="1" height="9" fill="#fff"/><rect x="514.5" y="349.1" width="15" height="15.5" rx="3" fill="#fff" stroke="#d0d0d0" stroke-width="1"/><rect x="570" y="394" width="16" height="16" fill="#f5793b"/><circle cx="573.5" cy="398.6" r="1.5" fill="#fff"/><path d="M572 407 L574.6 403 L576.3 404.4 L579.4 400 L584 407 Z" fill="#fff"/><rect x="514.5" y="392.1" width="15" height="15.5" rx="3" fill="#fff" stroke="#d0d0d0" stroke-width="1"/><rect x="514.6" y="179.5" width="15" height="15.5" rx="3" fill="#fff" stroke="#2a4ea8" stroke-width="1.3"/><path d="M518.4 187.2 H526.2" stroke="#666" stroke-width="1.5"/></svg>
<div class="a" style="left:1315px;top:165px;width:6px;height:804px;background:#faf9f8;"></div>
<svg style="left:0;top:0" width="1697" height="971" viewBox="0 0 1697 971" ><rect x="1317" y="549" width="2" height="17" fill="#222"/><path d="M1316.4 573.4 V577.2 L1319.6 575.3 Z" fill="#333"/></svg>
<div class="a" style="left:1321px;top:205px;width:347px;height:764px;background:#fff;"></div>
<div class="a" style="left:1321px;top:204px;width:355px;height:1px;background:#cfcfcf;"></div>
<div class="a" style="left:1321px;top:203px;width:37px;height:2px;background:#0a62e0;"></div>
<div class="t" style="left:1327.23px;top:178.00px;font-size:13px;color:#1464dc;letter-spacing:0.882px;">Info</div>
<div class="t" style="left:1369.96px;top:179.00px;font-size:13px;color:#2a55a8;letter-spacing:0.095px;">Logs</div>
<div class="t" style="left:1417.16px;top:179.00px;font-size:13px;color:#2a55a8;letter-spacing:-0.070px;">Revisions</div>
<div class="a" style="left:1668px;top:205px;width:10px;height:764px;background:#f4f4f4;"></div>
<div class="a" style="left:1668px;top:205px;width:8px;height:608px;background:#cdcdcd;"></div>
<div class="t" style="left:1364.58px;top:226.00px;font-size:12.8px;color:#333;letter-spacing:-0.143px;">EU-MDR.nlbl</div>
<div class="a" style="left:1630px;top:218px;width:25px;height:30px;background:#f4f4f4;border:1px solid #cfcfcf;border-radius:4px"></div>
<div class="a" style="left:1321px;top:261px;width:347px;height:1px;background:#dadada;"></div>
<div class="a" style="left:1321px;top:262px;width:347px;height:29px;background:#f3f3f3;"></div>
<div class="a" style="left:1321px;top:677px;width:347px;height:1px;background:#dadada;"></div>
<div class="a" style="left:1321px;top:678px;width:347px;height:29px;background:#f3f3f3;"></div>
<div class="a" style="left:1321px;top:266px;width:23px;height:24px;background:#f0f0f0;border-radius:0 3px 3px 0"></div>
<div class="a" style="left:1321px;top:682px;width:23px;height:24px;background:#f0f0f0;border-radius:0 3px 3px 0"></div>
<div class="t" style="left:1346.58px;top:270.00px;font-size:12.8px;color:#333;letter-spacing:-0.191px;">Preview</div>
<div class="t" style="left:1346.58px;top:686.00px;font-size:12.8px;color:#333;letter-spacing:0.056px;">File properties</div>
<svg style="left:0;top:0" width="1697" height="971" viewBox="0 0 1697 971" ><rect x="1338" y="226" width="16" height="16" fill="#0a70ea"/><rect x="1340" y="230" width="1" height="9" fill="#fff"/><rect x="1342" y="230" width="1" height="7" fill="#fff"/><rect x="1344" y="230" width="1" height="7" fill="#fff"/><rect x="1346" y="230" width="2" height="7" fill="#fff"/><rect x="1349" y="230" width="1" height="7" fill="#fff"/><rect x="1351" y="230" width="1" height="9" fill="#fff"/><g fill="#222"><circle cx="1642.4" cy="228.2" r="1.5"/><circle cx="1642.4" cy="232.5" r="1.5"/><circle cx="1642.4" cy="236.8" r="1.5"/></g><path d="M1328.8 275.4 H1337 L1332.9 280.2 Z M1328.8 691.4 H1337 L1332.9 696.2 Z" fill="#8a8a8a"/></svg>
<div class="t" style="left:1429.94px;top:731.00px;font-size:12.8px;color:#444;letter-spacing:-0.181px;">Type</div>
<div class="t" style="left:1475.38px;top:731.00px;font-size:12.8px;color:#444;letter-spacing:-0.101px;">Label</div>
<div class="t" style="left:1389.08px;top:756.00px;font-size:12.8px;color:#444;letter-spacing:0.121px;">Dimensions</div>
<div class="t" style="left:1475.44px;top:756.00px;font-size:12.8px;color:#444;letter-spacing:-0.507px;">120 X 100 mm</div>
<div class="t" style="left:1412.48px;top:781.00px;font-size:12.8px;color:#444;letter-spacing:-0.285px;">File size</div>
<div class="t" style="left:1475.76px;top:781.00px;font-size:12.8px;color:#444;letter-spacing:-0.871px;">79.1 KB</div>
<div class="t" style="left:1409.96px;top:806.00px;font-size:12.8px;color:#444;letter-spacing:0.317px;">Created</div>
<div class="t" style="left:1475.76px;top:806.00px;font-size:12.8px;color:#444;letter-spacing:-0.111px;">6/9/2021, 3:30 PM</div>
<div class="t" style="left:1404.48px;top:831.00px;font-size:12.8px;color:#444;letter-spacing:0.644px;">Modified</div>
<div class="t" style="left:1475.76px;top:831.00px;font-size:12.8px;color:#444;letter-spacing:-0.111px;">6/9/2021, 3:30 PM</div>
<div class="t" style="left:1389.78px;top:856.00px;font-size:12.8px;color:#444;letter-spacing:0.359px;">Description</div>
<div class="t" style="left:1475.89px;top:856.00px;font-size:12.8px;color:#444;">-</div>
<div class="t" style="left:1387.48px;top:881.00px;font-size:12.8px;color:#444;letter-spacing:0.365px;">Modified by</div>
<div class="t" style="left:1476.08px;top:881.00px;font-size:12.8px;color:#444;letter-spacing:-0.052px;">saso@nicelabel.com</div>
<div class="t" style="left:1403.00px;top:906.00px;font-size:12.8px;color:#444;letter-spacing:0.169px;">Workflow</div>
<div class="t" style="left:1475.89px;top:906.00px;font-size:12.8px;color:#444;">-</div>
<div class="t" style="left:1374.70px;top:931.00px;font-size:12.8px;color:#444;letter-spacing:0.190px;">Workflow step</div>
<div class="t" style="left:1475.89px;top:931.00px;font-size:12.8px;color:#444;">-</div>
<div class="t" style="left:1382.76px;top:956.00px;font-size:12.8px;color:#444;letter-spacing:0.203px;">Checked out</div>
<div class="t" style="left:1475.38px;top:956.00px;font-size:12.8px;color:#444;letter-spacing:0.816px;">No</div>
<div class="a" style="left:1345px;top:304px;width:300px;height:360px;background:#fff;border:1px solid #c4c4c8"></div>
<svg style="left:0;top:0" width="1697" height="971" viewBox="0 0 1697 971" ><path d="M1697 968.3 V971 H1692.8 Z" fill="#111"/></svg>
<svg style="left:0;top:0" width="1697" height="971" viewBox="0 0 1697 971" ><g font-family="Liberation Sans"><text x="1370.2" y="340.3" font-size="19.5" font-weight="bold" fill="#111" textLength="219.2" lengthAdjust="spacingAndGlyphs">CompuHyper GlobalMed</text><text x="1370.6" y="358.9" font-size="17.3"  fill="#222" textLength="184.4" lengthAdjust="spacingAndGlyphs">Fictitious Medical Device</text><g fill="none" stroke="#111" stroke-width="1.3"><rect x="1364.3" y="370" width="29" height="17.8"/><rect x="1364.3" y="389.2" width="29" height="18"/></g><text x="1367.2" y="383.6" font-size="12.4" font-weight="bold" stroke="#111" stroke-width="0.45" fill="#111" textLength="22.8" lengthAdjust="spacingAndGlyphs">REF</text><text x="1367.4" y="402.6" font-size="12.4" font-weight="bold" stroke="#111" stroke-width="0.45" fill="#111" textLength="22.2" lengthAdjust="spacingAndGlyphs">LOT</text><text x="1398.6" y="383.3" font-size="10.2"  fill="#333" textLength="38.4" lengthAdjust="spacingAndGlyphs">ABC123</text><text x="1398.9" y="403" font-size="10.2"  fill="#333" textLength="68.9" lengthAdjust="spacingAndGlyphs">123415020123</text><text x="1398.8" y="426.1" font-size="10.2"  fill="#444" textLength="34.0" lengthAdjust="spacingAndGlyphs">??????</text><text x="1398.8" y="455.4" font-size="10.2"  fill="#444" textLength="34.0" lengthAdjust="spacingAndGlyphs">??????</text><path d="M1374 413 H1386 V416.6 L1381.4 421.8 L1384.6 426 M1374 413 V416.6 L1378.6 421.8 L1375.4 426" fill="none" stroke="#222" stroke-width="0.9"/><rect x="1373.4" y="426.6" width="13.2" height="6" fill="#111"/><path d="M1367.8 458.2 V449.6 L1370.6 446.2 L1373.4 450.4 L1376.2 446.6 L1379 450.4 L1381.8 446.6 L1385.6 451 V438.2 H1390.6 V458.2 Z" fill="none" stroke="#222" stroke-width="1"/><path d="M1511.8 391.8 V385.4 H1512.6 L1515 379.2 L1517.6 383.6 L1520.5 379.2 L1523.1 383.6 L1525.8 379.2 L1528.3 383.6 V371.9 H1534.1 V391.8 Z" fill="#111"/><text x="1537.9" y="377.1" font-size="7.2"  fill="#444" textLength="88.1" lengthAdjust="spacingAndGlyphs">CompuHyper GlobalMed</text><rect x="1491.2" y="408.8" width="42.2" height="16.8" fill="none" stroke="#111" stroke-width="2.1"/><path d="M1512.2 408 V426" stroke="#111" stroke-width="1.2"/><text x="1497" y="419.4" font-size="5.6"  fill="#333" textLength="8.5" lengthAdjust="spacingAndGlyphs">EC</text><text x="1517.3" y="419.4" font-size="5.6"  fill="#333" textLength="11.5" lengthAdjust="spacingAndGlyphs">REP</text><text x="1537.9" y="415.1" font-size="7.2"  fill="#444" textLength="48.6" lengthAdjust="spacingAndGlyphs">MedDevFront</text><rect x="1361.9" y="474.9" width="44.4" height="14.4" fill="none" stroke="#222" stroke-width="1"/><path d="M1394.5 475 V489" stroke="#999" stroke-width="0.7"/><text x="1362.8" y="485.4" font-size="8.4" font-weight="bold" stroke="#111" stroke-width="0.3" fill="#111" textLength="30.2" lengthAdjust="spacingAndGlyphs">STERILE</text><text x="1396.8" y="485.4" font-size="8" font-weight="bold" fill="#333" textLength="5.4" lengthAdjust="spacingAndGlyphs">R</text><ellipse cx="1428.8" cy="481.1" rx="16.6" ry="10.4" fill="none" stroke="#111" stroke-width="1"/><text x="1418.6" y="484.9" font-size="10.3"  fill="#222" textLength="21.4" lengthAdjust="spacingAndGlyphs">SBS</text><g fill="none" stroke="#333" stroke-width="0.75"><circle cx="1465.5" cy="482.1" r="11.8"/><path d="M1457 474 L1474 490.4"/><path d="M1459.2 479.6 L1466 475.4 L1473 479.4 L1466.4 483.8 Z M1459.2 479.6 V486.2 L1466.4 490.2 V483.8 M1473 479.4 V486 L1466.4 490.2"/></g><g fill="none" stroke="#0a0a0a" stroke-width="3.3"><path d="M1517.6 479.9 A10.6 10.6 0 1 0 1517.6 501"/><path d="M1539.3 479.9 A10.6 10.6 0 1 0 1539.3 501 M1529.4 490.45 H1537.6"/></g><g fill="none" stroke="#333" stroke-width="0.75"><circle cx="1374.8" cy="513.3" r="11.5"/><path d="M1366.6 505 L1382.4 521.6 M1370.6 522 L1378.6 508.6 Q1379.6 505.4 1377 504.6 Q1374.4 504.6 1375 507.6"/></g><g fill="none" stroke="#111" stroke-width="1.7"><circle cx="1408" cy="513.6" r="10.9"/><path d="M1400.2 506 L1415.6 521.4"/></g><text x="1405.6" y="511.4" font-size="7.5"  fill="#222" textLength="4.6" lengthAdjust="spacingAndGlyphs">2</text><path d="M1399.5 515 H1416.5" stroke="#333" stroke-width="1.2" stroke-dasharray="1.6 1.2"/><rect x="1428.9" y="501.6" width="35.4" height="22" fill="none" stroke="#111" stroke-width="1.3"/><text x="1433.8" y="518.7" font-size="16.2"  fill="#111" textLength="25.9" lengthAdjust="spacingAndGlyphs">MD</text><g fill="none" stroke="#222" stroke-width="0.9"><path d="M1378.6 538.6 L1392 536 L1405.4 538.6 V553.4 L1392 551.2 L1378.6 554.4 Z M1392 536 V551.2 M1378.6 554.4 Q1385 556 1392 553 Q1399 555.6 1405.4 553.4"/></g><text x="1395.6" y="550.8" font-family="Liberation Serif" font-weight="bold" font-size="13" fill="#111" stroke="#111" stroke-width="0.4">i</text><text x="1361.1" y="562.2" font-size="6.2"  fill="#555" textLength="63.7" lengthAdjust="spacingAndGlyphs">www.chgm-ifu.com/ifu</text><path d="M1458.5 536.6 L1469.2 555 H1447.9 Z" fill="none" stroke="#222" stroke-width="0.8"/><path d="M1458.5 541.5 V550.6 M1458.5 552.2 V553.6" stroke="#222" stroke-width="0.9"/><g fill="none" stroke="#333" stroke-width="0.75"><circle cx="1508" cy="544.9" r="11.7" stroke-dasharray="2.6 0.9"/><path d="M1499.6 547.5 H1516.8" stroke-width="0.9"/><path d="M1506 540 V544.5 M1510 540 V544.5 M1503.4 543 L1508 546 L1512.6 543 M1502 550.5 L1504 552 M1507 550 L1509 552 M1512 550.5 L1514 552" stroke-width="0.6"/></g><text x="1525" y="548.2" font-size="6.4"  fill="#555" textLength="58.2" lengthAdjust="spacingAndGlyphs">1.0 mg nanomaterial</text><text x="1436.2" y="596.6" font-size="10.4"  fill="#333" textLength="98.3" lengthAdjust="spacingAndGlyphs">(01)12345678901231</text><text x="1436.2" y="611.8" font-size="10.4"  fill="#333" textLength="52.4" lengthAdjust="spacingAndGlyphs">(17)241122</text><text x="1436.2" y="626.5" font-size="10.4"  fill="#333" textLength="52.4" lengthAdjust="spacingAndGlyphs">(11)221122</text><text x="1436.2" y="641.2" font-size="10.4"  fill="#333" textLength="87.6" lengthAdjust="spacingAndGlyphs">(10)123415020123</text><path d="M1369.90 586.60h12.38v1.81h-12.38zM1384.00 586.60h3.57v1.81h-3.57zM1389.28 586.60h1.81v1.81h-1.81zM1392.81 586.60h3.57v1.81h-3.57zM1398.09 586.60h8.86v1.81h-8.86zM1408.67 586.60h12.38v1.81h-12.38zM1369.90 588.36h1.81v1.81h-1.81zM1380.47 588.36h1.81v1.81h-1.81zM1385.76 588.36h3.57v1.81h-3.57zM1394.57 588.36h1.81v1.81h-1.81zM1398.09 588.36h1.81v1.81h-1.81zM1401.62 588.36h5.34v1.81h-5.34zM1408.67 588.36h1.81v1.81h-1.81zM1419.24 588.36h1.81v1.81h-1.81zM1369.90 590.12h1.81v1.81h-1.81zM1373.42 590.12h5.34v1.81h-5.34zM1380.47 590.12h1.81v1.81h-1.81zM1384.00 590.12h1.81v1.81h-1.81zM1387.52 590.12h1.81v1.81h-1.81zM1392.81 590.12h1.81v1.81h-1.81zM1396.33 590.12h5.34v1.81h-5.34zM1403.38 590.12h3.57v1.81h-3.57zM1408.67 590.12h1.81v1.81h-1.81zM1412.19 590.12h5.34v1.81h-5.34zM1419.24 590.12h1.81v1.81h-1.81zM1369.90 591.89h1.81v1.81h-1.81zM1373.42 591.89h5.34v1.81h-5.34zM1380.47 591.89h1.81v1.81h-1.81zM1385.76 591.89h3.57v1.81h-3.57zM1392.81 591.89h1.81v1.81h-1.81zM1401.62 591.89h1.81v1.81h-1.81zM1405.14 591.89h1.81v1.81h-1.81zM1408.67 591.89h1.81v1.81h-1.81zM1412.19 591.89h5.34v1.81h-5.34zM1419.24 591.89h1.81v1.81h-1.81zM1369.90 593.65h1.81v1.81h-1.81zM1373.42 593.65h5.34v1.81h-5.34zM1380.47 593.65h1.81v1.81h-1.81zM1384.00 593.65h1.81v1.81h-1.81zM1387.52 593.65h5.34v1.81h-5.34zM1399.86 593.65h1.81v1.81h-1.81zM1408.67 593.65h1.81v1.81h-1.81zM1412.19 593.65h5.34v1.81h-5.34zM1419.24 593.65h1.81v1.81h-1.81zM1369.90 595.41h1.81v1.81h-1.81zM1380.47 595.41h1.81v1.81h-1.81zM1384.00 595.41h1.81v1.81h-1.81zM1389.28 595.41h1.81v1.81h-1.81zM1392.81 595.41h1.81v1.81h-1.81zM1401.62 595.41h3.57v1.81h-3.57zM1408.67 595.41h1.81v1.81h-1.81zM1419.24 595.41h1.81v1.81h-1.81zM1369.90 597.17h12.38v1.81h-12.38zM1384.00 597.17h1.81v1.81h-1.81zM1387.52 597.17h1.81v1.81h-1.81zM1391.04 597.17h1.81v1.81h-1.81zM1394.57 597.17h1.81v1.81h-1.81zM1398.09 597.17h1.81v1.81h-1.81zM1401.62 597.17h1.81v1.81h-1.81zM1405.14 597.17h1.81v1.81h-1.81zM1408.67 597.17h12.38v1.81h-12.38zM1384.00 598.93h8.86v1.81h-8.86zM1394.57 598.93h5.34v1.81h-5.34zM1401.62 598.93h3.57v1.81h-3.57zM1375.19 600.70h7.10v1.81h-7.10zM1385.76 600.70h8.86v1.81h-8.86zM1396.33 600.70h7.10v1.81h-7.10zM1413.95 600.70h1.81v1.81h-1.81zM1371.66 602.46h5.34v1.81h-5.34zM1378.71 602.46h1.81v1.81h-1.81zM1382.23 602.46h17.67v1.81h-17.67zM1403.38 602.46h8.86v1.81h-8.86zM1415.71 602.46h5.34v1.81h-5.34zM1369.90 604.22h5.34v1.81h-5.34zM1376.95 604.22h5.34v1.81h-5.34zM1385.76 604.22h1.81v1.81h-1.81zM1389.28 604.22h1.81v1.81h-1.81zM1398.09 604.22h5.34v1.81h-5.34zM1408.67 604.22h3.57v1.81h-3.57zM1371.66 605.98h1.81v1.81h-1.81zM1375.19 605.98h5.34v1.81h-5.34zM1382.23 605.98h3.57v1.81h-3.57zM1389.28 605.98h1.81v1.81h-1.81zM1396.33 605.98h8.86v1.81h-8.86zM1410.43 605.98h1.81v1.81h-1.81zM1415.71 605.98h1.81v1.81h-1.81zM1373.42 607.74h3.57v1.81h-3.57zM1378.71 607.74h3.57v1.81h-3.57zM1385.76 607.74h3.57v1.81h-3.57zM1392.81 607.74h5.34v1.81h-5.34zM1401.62 607.74h1.81v1.81h-1.81zM1408.67 607.74h1.81v1.81h-1.81zM1412.19 607.74h3.57v1.81h-3.57zM1371.66 609.51h1.81v1.81h-1.81zM1376.95 609.51h3.57v1.81h-3.57zM1382.23 609.51h3.57v1.81h-3.57zM1387.52 609.51h5.34v1.81h-5.34zM1394.57 609.51h3.57v1.81h-3.57zM1401.62 609.51h1.81v1.81h-1.81zM1410.43 609.51h7.10v1.81h-7.10zM1419.24 609.51h1.81v1.81h-1.81zM1369.90 611.27h1.81v1.81h-1.81zM1375.19 611.27h1.81v1.81h-1.81zM1380.47 611.27h1.81v1.81h-1.81zM1384.00 611.27h1.81v1.81h-1.81zM1387.52 611.27h3.57v1.81h-3.57zM1399.86 611.27h1.81v1.81h-1.81zM1408.67 611.27h1.81v1.81h-1.81zM1412.19 611.27h1.81v1.81h-1.81zM1369.90 613.03h1.81v1.81h-1.81zM1376.95 613.03h3.57v1.81h-3.57zM1382.23 613.03h7.10v1.81h-7.10zM1394.57 613.03h1.81v1.81h-1.81zM1399.86 613.03h1.81v1.81h-1.81zM1405.14 613.03h1.81v1.81h-1.81zM1408.67 613.03h3.57v1.81h-3.57zM1415.71 613.03h3.57v1.81h-3.57zM1369.90 614.79h5.34v1.81h-5.34zM1376.95 614.79h1.81v1.81h-1.81zM1380.47 614.79h7.10v1.81h-7.10zM1391.04 614.79h1.81v1.81h-1.81zM1398.09 614.79h5.34v1.81h-5.34zM1405.14 614.79h5.34v1.81h-5.34zM1413.95 614.79h3.57v1.81h-3.57zM1371.66 616.56h3.57v1.81h-3.57zM1376.95 616.56h3.57v1.81h-3.57zM1387.52 616.56h1.81v1.81h-1.81zM1391.04 616.56h1.81v1.81h-1.81zM1394.57 616.56h3.57v1.81h-3.57zM1401.62 616.56h3.57v1.81h-3.57zM1406.90 616.56h12.38v1.81h-12.38zM1369.90 618.32h1.81v1.81h-1.81zM1373.42 618.32h10.62v1.81h-10.62zM1387.52 618.32h3.57v1.81h-3.57zM1392.81 618.32h1.81v1.81h-1.81zM1396.33 618.32h3.57v1.81h-3.57zM1401.62 618.32h1.81v1.81h-1.81zM1408.67 618.32h1.81v1.81h-1.81zM1415.71 618.32h5.34v1.81h-5.34zM1369.90 620.08h3.57v1.81h-3.57zM1375.19 620.08h5.34v1.81h-5.34zM1387.52 620.08h12.38v1.81h-12.38zM1405.14 620.08h1.81v1.81h-1.81zM1408.67 620.08h8.86v1.81h-8.86zM1419.24 620.08h1.81v1.81h-1.81zM1371.66 621.84h15.91v1.81h-15.91zM1398.09 621.84h3.57v1.81h-3.57zM1403.38 621.84h10.62v1.81h-10.62zM1417.48 621.84h1.81v1.81h-1.81zM1391.04 623.60h1.81v1.81h-1.81zM1405.14 623.60h1.81v1.81h-1.81zM1412.19 623.60h1.81v1.81h-1.81zM1417.48 623.60h3.57v1.81h-3.57zM1369.90 625.37h12.38v1.81h-12.38zM1384.00 625.37h5.34v1.81h-5.34zM1398.09 625.37h3.57v1.81h-3.57zM1405.14 625.37h1.81v1.81h-1.81zM1408.67 625.37h1.81v1.81h-1.81zM1412.19 625.37h1.81v1.81h-1.81zM1419.24 625.37h1.81v1.81h-1.81zM1369.90 627.13h1.81v1.81h-1.81zM1380.47 627.13h1.81v1.81h-1.81zM1385.76 627.13h5.34v1.81h-5.34zM1392.81 627.13h1.81v1.81h-1.81zM1398.09 627.13h5.34v1.81h-5.34zM1405.14 627.13h1.81v1.81h-1.81zM1412.19 627.13h1.81v1.81h-1.81zM1419.24 627.13h1.81v1.81h-1.81zM1369.90 628.89h1.81v1.81h-1.81zM1373.42 628.89h5.34v1.81h-5.34zM1380.47 628.89h1.81v1.81h-1.81zM1384.00 628.89h3.57v1.81h-3.57zM1389.28 628.89h1.81v1.81h-1.81zM1392.81 628.89h5.34v1.81h-5.34zM1403.38 628.89h10.62v1.81h-10.62zM1415.71 628.89h5.34v1.81h-5.34zM1369.90 630.65h1.81v1.81h-1.81zM1373.42 630.65h5.34v1.81h-5.34zM1380.47 630.65h1.81v1.81h-1.81zM1385.76 630.65h1.81v1.81h-1.81zM1391.04 630.65h3.57v1.81h-3.57zM1398.09 630.65h5.34v1.81h-5.34zM1405.14 630.65h1.81v1.81h-1.81zM1408.67 630.65h1.81v1.81h-1.81zM1413.95 630.65h1.81v1.81h-1.81zM1369.90 632.41h1.81v1.81h-1.81zM1373.42 632.41h5.34v1.81h-5.34zM1380.47 632.41h1.81v1.81h-1.81zM1385.76 632.41h1.81v1.81h-1.81zM1389.28 632.41h15.91v1.81h-15.91zM1406.90 632.41h1.81v1.81h-1.81zM1412.19 632.41h1.81v1.81h-1.81zM1419.24 632.41h1.81v1.81h-1.81zM1369.90 634.18h1.81v1.81h-1.81zM1380.47 634.18h1.81v1.81h-1.81zM1384.00 634.18h3.57v1.81h-3.57zM1391.04 634.18h8.86v1.81h-8.86zM1401.62 634.18h1.81v1.81h-1.81zM1405.14 634.18h3.57v1.81h-3.57zM1410.43 634.18h3.57v1.81h-3.57zM1369.90 635.94h12.38v1.81h-12.38zM1391.04 635.94h1.81v1.81h-1.81zM1394.57 635.94h1.81v1.81h-1.81zM1399.86 635.94h3.57v1.81h-3.57zM1405.14 635.94h7.10v1.81h-7.10zM1415.71 635.94h1.81v1.81h-1.81zM1419.24 635.94h1.81v1.81h-1.81z" fill="#0a0a0a"/></g></svg>
</body></html>
